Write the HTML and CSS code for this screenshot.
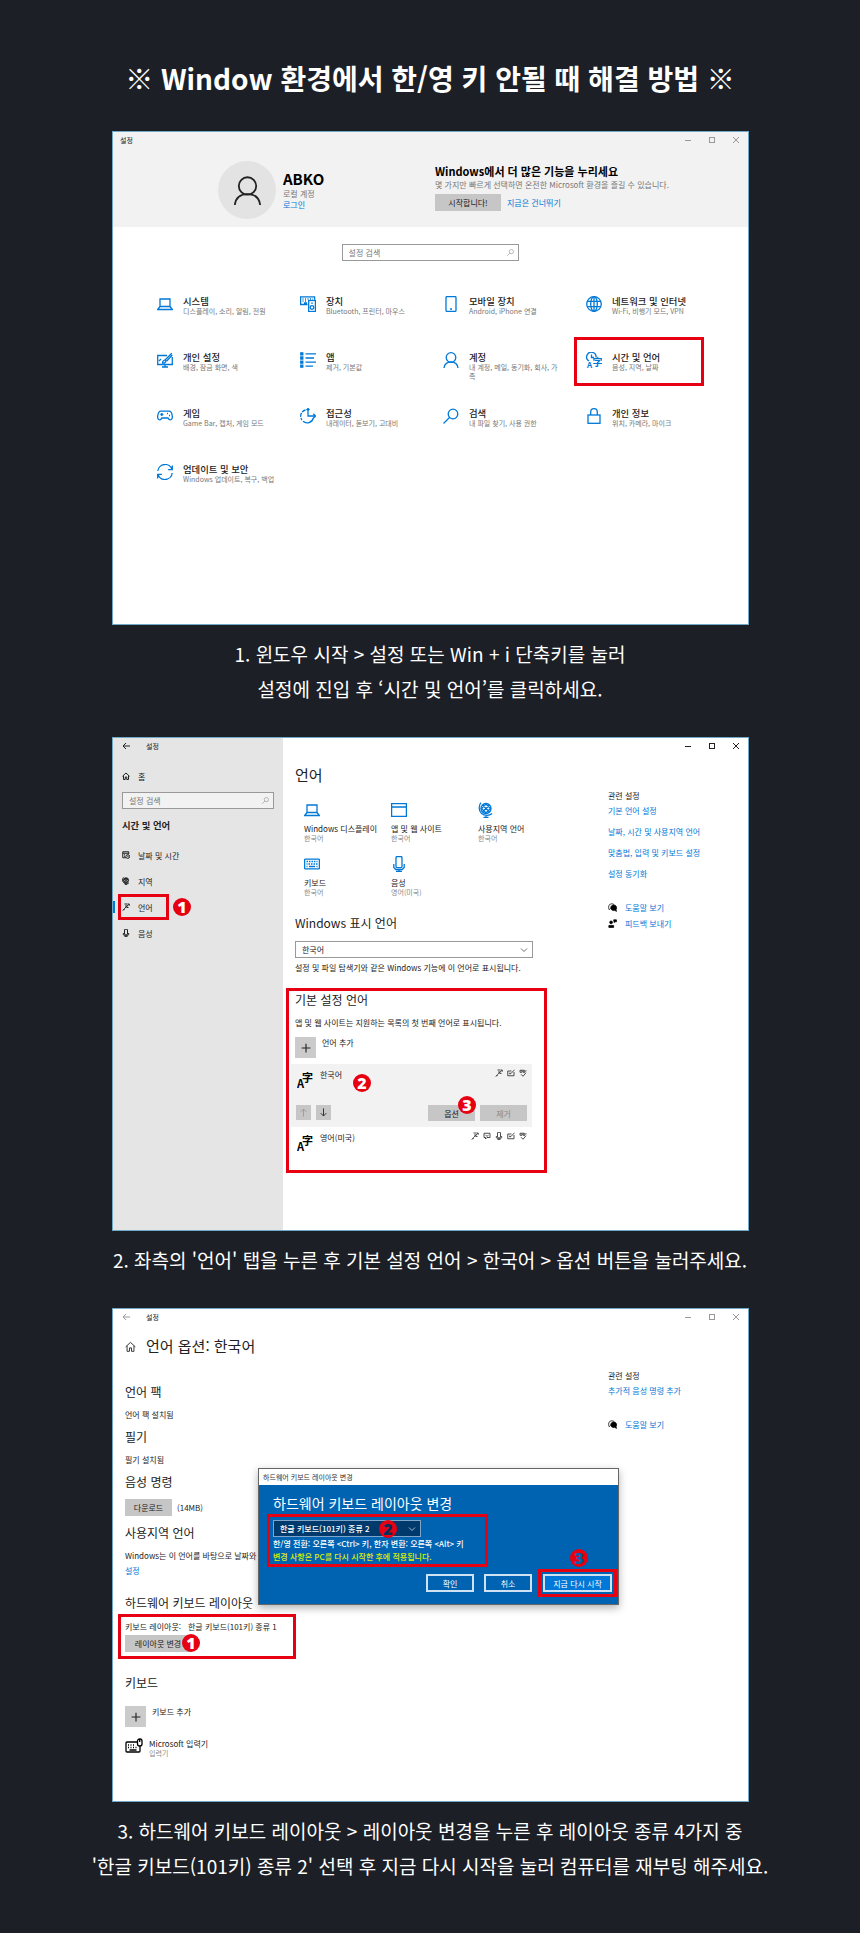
FILE: index.html
```
<!DOCTYPE html>
<html lang="ko">
<head>
  <meta charset="UTF-8">
  <meta name="viewport" content="width=device-width, initial-scale=1.0">
  <title>Window 환경에서 한/영 키 안될 때 해결 방법</title>
  <link rel="stylesheet" href="styles.css">
</head>
<body>

  <!-- 아이콘 모음 -->
  <svg class="sprite" aria-hidden="true">
    <symbol id="i-min" viewBox="0 0 8 8"><path d="M1 4.5h6"/></symbol>
    <symbol id="i-max" viewBox="0 0 8 8"><rect x="1.5" y="1.5" width="5" height="5"/></symbol>
    <symbol id="i-close" viewBox="0 0 8 8"><path d="M1 1l6 6M7 1L1 7"/></symbol>
    <symbol id="i-back" viewBox="0 0 8 8"><path d="M8 4H1M4 1L1 4l3 3"/></symbol>
    <symbol id="i-find" viewBox="0 0 16 16"><circle cx="10" cy="6" r="4.8"/><path d="M6.5 9.5L.5 15.5"/></symbol>
    <symbol id="i-user" viewBox="0 0 16 16"><circle cx="8" cy="5.5" r="4.8"/><path d="M1 16c.5-4 3.200-6 7-6s6.500 2 7 6"/></symbol>
    <symbol id="i-laptop" viewBox="0 0 16 16"><path d="M3 3h10v7.500H3zM3 10.500L.7 13.500h14.600L13 10.500"/></symbol>
    <symbol id="i-device" viewBox="0 0 16 16"><path d="M7.500 8.500H.6V.8h14v3M2.500 3h1M5 3h1M7.500 3h1M10 3h1M12.500 3h.6M2.500 5h1M5 5h1M4 7h3"/><rect x="8.700" y="4.500" width="6.700" height="11"/><circle cx="12" cy="11.500" r="1.800"/><path d="M12 6.500v1.500"/></symbol>
    <symbol id="i-phone" viewBox="0 0 16 16"><rect x="3" y=".6" width="10" height="14.800" rx="1"/><path d="M7 13h2"/></symbol>
    <symbol id="i-globe" viewBox="0 0 16 16"><circle cx="8" cy="8" r="7.300"/><ellipse cx="8" cy="8" rx="3.300" ry="7.300"/><path d="M1.500 5.300h13M1.500 10.700h13M8 .7v14.600"/></symbol>
    <symbol id="i-paint" viewBox="0 0 16 16"><path d="M10 3.500H.7v9h14.600V5M5 15h6M8 12.500V15M2 9l2-2M14.800 1.200L8 8M15.300 3L9.500 9.300"/><path d="M8.800 8.500c-2-1-3 .5-3.300 2.500 1.800.3 3.600-.5 3.300-2.500z"/></symbol>
    <symbol id="i-apps" viewBox="0 0 16 16"><path d="M5.500 1.800H16M5.500 6H14M5.500 10.200H16M5.500 14.200H13"/><path class="solid" d="M.8.8h2v2h-2zM.8 5h2v2h-2zM.8 9.200h2v2h-2zM.8 13.200h2v2h-2z"/></symbol>
    <symbol id="i-game" viewBox="0 0 16 16"><path d="M4 3.200h8c2 0 3 2 3.300 5 .4 3.400-2 4.600-3.600 2.800L11 10H5l-.8 1C2.700 12.800.3 11.600.7 8.200 1 5.200 2 3.200 4 3.200zM3.300 6.500h3M4.800 5v3M10 5.500h1M12 7.500h1"/></symbol>
    <symbol id="i-ease" viewBox="0 0 16 16"><path d="M5.500 2A6.300 6.300 0 0 0 2 12" stroke-dasharray="4 1"/><path d="M3 13.300A6.300 6.300 0 0 0 13.300 10M8 .5v7.500h7.500M13.300 5.800L15.500 8l-2.200 2.200M6.500 2L8 .5l1.500 1.500"/></symbol>
    <symbol id="i-lock" viewBox="0 0 16 16"><rect x="2" y="7" width="12" height="8.300"/><path d="M4.700 7V4a3.300 3.300 0 0 1 6.600 0v3"/></symbol>
    <symbol id="i-sync" viewBox="0 0 16 16"><path d="M.8 7A7.300 7.300 0 0 1 15 5.500M15.300 1.500v4.200h-4.200M15.200 9A7.300 7.300 0 0 1 1 10.500M.7 14.500v-4.200h4.200"/></symbol>
    <symbol id="i-clock-lang" viewBox="0 0 16 16"><path d="M3 9A4.700 4.700 0 1 1 10 5.500M5.500 2.500v3h2.500"/><text class="glyph" x="1" y="15.800" font-size="8">A</text><text class="glyph" x="6.500" y="14" font-size="10">字</text></symbol>
    <symbol id="i-lang" viewBox="0 0 16 16"><text class="glyph" x="0" y="15.500" font-size="11">A</text><text class="glyph" x="5" y="10" font-size="11">字</text></symbol>
    <symbol id="i-window" viewBox="0 0 16 16"><path d="M.6 1.600h14.800v12.800H.6zM.6 5h14.800"/></symbol>
    <symbol id="i-region" viewBox="0 0 16 16"><circle cx="8" cy="6.500" r="5"/><path d="M3 .8C.5 3 .5 9 3.500 11.500s8 2.500 10.500 0M8 13.300v2M5.500 15.400h5M4.500 3l7 7M11.500 3l-7 7M3.500 6.500L8 2l4.500 4.500L8 11z"/></symbol>
    <symbol id="i-keyboard" viewBox="0 0 16 16"><rect x=".6" y="3.200" width="14.800" height="9.600" rx=".8"/><path d="M2.500 5.500h1.500M5 5.500h1.500M7.500 5.500H9M10 5.500h1.500M12.500 5.500h1M2.500 8h1M4.500 8h1.500M7 8h1.500M9.500 8H11M12 8h1.500M2.500 10.500h1M5 10.500h6M12.500 10.500h1"/></symbol>
    <symbol id="i-mic" viewBox="0 0 16 16"><rect x="5" y=".6" width="6" height="11" rx="1"/><path d="M2.800 8v3.500l2 2h6.400l2-2V8M8 13.500v2M5 15.500h6"/></symbol>
    <symbol id="i-home" viewBox="0 0 16 16"><path d="M1 8.500L8 2l7 6.500M3 7v8h3.500v-5h3v5H13V7"/></symbol>
    <symbol id="i-date" viewBox="0 0 16 16"><path d="M8 13.500H1.500v-12h12V6M1.500 4.500h12M4 7.500h2M4 10.500h2"/><circle cx="11.500" cy="11" r="3.800"/><path d="M11.500 9v2.200H13"/></symbol>
    <symbol id="i-pen" viewBox="0 0 16 16"><path d="M5 2h6M11.500 2h3v3.500M13.500 3L5 11l-1.500 3.500M6 6h5M9 9h4M1.500 15l3-3"/></symbol>
    <symbol id="i-speech" viewBox="0 0 16 16"><path d="M2 2.500h12v8.500H8l-3 3v-3H2zM5 6.500c1.500 2 4.500 2 6 0"/></symbol>
    <symbol id="i-write" viewBox="0 0 16 16"><path d="M9 4H1.500v9.500h12.500V6M15 1.500L8 9l-2.500.8M4 8.500h3"/></symbol>
    <symbol id="i-abc" viewBox="0 0 16 16"><path d="M2 2.500h4v4H2zM8 1v5.500h4V3.500H8M15 3.500h-2M4 10.500l4 4 6-7"/></symbol>
    <symbol id="i-help" viewBox="0 0 16 16"><path d="M2 11.500C0 8 1 2 5.500 1.500 9 1 11 3 11 3M1.500 12.500L4 10"/><path class="solid" d="M10 3.500a5 5 0 0 0-3.500 8.700c1.500 1.400 4 1.600 5.500.8l3 2-.6-3.600A5 5 0 0 0 10 3.500z"/></symbol>
    <symbol id="i-feedback" viewBox="0 0 16 16"><circle class="solid" cx="5.500" cy="6" r="2.500"/><path class="solid" d="M1.500 15v-3.500h8.500V15zM10 1.500h5v3.500h-2.500l-1.500 1.500z"/></symbol>
    <symbol id="i-ime" viewBox="0 0 18 16"><rect x="1" y="4" width="14" height="10" rx="1"/><path d="M3 7h1M5.500 7h1M8 7h1M3 9.500h1M5.500 9.500h1M8 9.500h1M10.500 9.500h1M4.500 12h7"/><rect class="mouse" x="12.500" y="1" width="4.500" height="7" rx="2"/><path d="M14.700 1v3"/></symbol>
    <symbol id="i-plus" viewBox="0 0 16 16"><path d="M8 3v10M3 8h10"/></symbol>
    <symbol id="i-up" viewBox="0 0 16 16"><path d="M8 14V3M4 7l4-4 4 4"/></symbol>
    <symbol id="i-down" viewBox="0 0 16 16"><path d="M8 2v11M4 9l4 4 4-4"/></symbol>
    <symbol id="i-chevron" viewBox="0 0 16 16"><path d="M2 5l6 6 6-6"/></symbol>
  </svg>

  <main class="guide">
    <h1>※ Window 환경에서 한/영 키 안될 때 해결 방법 ※</h1>

    <!-- 1단계 : 설정 홈 -->
    <section class="window">
      <div class="account-bar">
        <div class="titlebar muted">
          <span class="app-name">설정</span>
          <div class="controls">
            <svg><use href="#i-min"/></svg>
            <svg><use href="#i-max"/></svg>
            <svg><use href="#i-close"/></svg>
          </div>
        </div>
        <div class="account">
          <div class="profile">
            <div class="avatar"><svg><use href="#i-user"/></svg></div>
            <div>
              <strong class="user-name">ABKO</strong>
              <p class="gray">로컬 계정</p>
              <a href="#">로그인</a>
            </div>
          </div>
          <div class="promo">
            <h2>Windows에서 더 많은 기능을 누리세요</h2>
            <p class="gray">몇 가지만 빠르게 선택하면 온전한 Microsoft 환경을 즐길 수 있습니다.</p>
            <div class="promo-actions">
              <button class="btn wide">시작합니다!</button>
              <a href="#">지금은 건너뛰기</a>
            </div>
          </div>
        </div>
      </div>

      <label class="search home-search">
        <input type="text" placeholder="설정 검색" aria-label="설정 검색">
        <svg><use href="#i-find"/></svg>
      </label>

      <div class="categories">
        <div class="category"><svg class="icon"><use href="#i-laptop"/></svg><div><h3>시스템</h3><p>디스플레이, 소리, 알림, 전원</p></div></div>
        <div class="category"><svg class="icon"><use href="#i-device"/></svg><div><h3>장치</h3><p>Bluetooth, 프린터, 마우스</p></div></div>
        <div class="category"><svg class="icon"><use href="#i-phone"/></svg><div><h3>모바일 장치</h3><p>Android, iPhone 연결</p></div></div>
        <div class="category"><svg class="icon"><use href="#i-globe"/></svg><div><h3>네트워크 및 인터넷</h3><p>Wi-Fi, 비행기 모드, VPN</p></div></div>
        <div class="category"><svg class="icon"><use href="#i-paint"/></svg><div><h3>개인 설정</h3><p>배경, 잠금 화면, 색</p></div></div>
        <div class="category"><svg class="icon"><use href="#i-apps"/></svg><div><h3>앱</h3><p>제거, 기본값</p></div></div>
        <div class="category"><svg class="icon"><use href="#i-user"/></svg><div><h3>계정</h3><p>내 계정, 메일, 동기화, 회사, 가족</p></div></div>
        <div class="category marked"><svg class="icon"><use href="#i-clock-lang"/></svg><div><h3>시간 및 언어</h3><p>음성, 지역, 날짜</p></div></div>
        <div class="category"><svg class="icon"><use href="#i-game"/></svg><div><h3>게임</h3><p>Game Bar, 캡처, 게임 모드</p></div></div>
        <div class="category"><svg class="icon"><use href="#i-ease"/></svg><div><h3>접근성</h3><p>내레이터, 돋보기, 고대비</p></div></div>
        <div class="category"><svg class="icon"><use href="#i-find"/></svg><div><h3>검색</h3><p>내 파일 찾기, 사용 권한</p></div></div>
        <div class="category"><svg class="icon"><use href="#i-lock"/></svg><div><h3>개인 정보</h3><p>위치, 카메라, 마이크</p></div></div>
        <div class="category"><svg class="icon"><use href="#i-sync"/></svg><div><h3>업데이트 및 보안</h3><p>Windows 업데이트, 복구, 백업</p></div></div>
      </div>
    </section>
    <p class="caption">1. 윈도우 시작 &gt; 설정 또는 Win + i 단축키를 눌러<br>설정에 진입 후 ‘시간 및 언어’를 클릭하세요.</p>

    <!-- 2단계 : 언어 -->
    <section class="window split">
      <aside class="sidebar">
        <div class="titlebar">
          <svg class="back"><use href="#i-back"/></svg>
          <span class="app-name">설정</span>
        </div>
        <a class="home" href="#"><svg><use href="#i-home"/></svg>홈</a>
        <label class="search">
          <input type="text" placeholder="설정 검색" aria-label="설정 검색">
          <svg><use href="#i-find"/></svg>
        </label>
        <h3 class="side-title">시간 및 언어</h3>
        <ul class="nav">
          <li><a href="#"><svg><use href="#i-date"/></svg>날짜 및 시간</a></li>
          <li><a href="#"><svg><use href="#i-region"/></svg>지역</a></li>
          <li class="active"><a href="#"><svg><use href="#i-pen"/></svg>언어</a><span class="badge">1</span></li>
          <li><a href="#"><svg><use href="#i-mic"/></svg>음성</a></li>
        </ul>
      </aside>

      <div class="content">
        <div class="titlebar">
          <div class="controls">
            <svg><use href="#i-min"/></svg>
            <svg><use href="#i-max"/></svg>
            <svg><use href="#i-close"/></svg>
          </div>
        </div>
        <h2 class="page-title">언어</h2>
        <div class="columns">
          <div>
            <div class="tiles">
              <div class="tile"><svg class="icon"><use href="#i-laptop"/></svg><h4>Windows 디스플레이</h4><p>한국어</p></div>
              <div class="tile"><svg class="icon"><use href="#i-window"/></svg><h4>앱 및 웹 사이트</h4><p>한국어</p></div>
              <div class="tile"><svg class="icon"><use href="#i-region"/></svg><h4>사용지역 언어</h4><p>한국어</p></div>
              <div class="tile"><svg class="icon"><use href="#i-keyboard"/></svg><h4>키보드</h4><p>한국어</p></div>
              <div class="tile"><svg class="icon"><use href="#i-mic"/></svg><h4>음성</h4><p>영어(미국)</p></div>
            </div>
            <h3 class="section-title">Windows 표시 언어</h3>
            <div class="select display-lang">
              <select aria-label="Windows 표시 언어"><option>한국어</option></select>
              <svg><use href="#i-chevron"/></svg>
            </div>
            <p class="note">설정 및 파일 탐색기와 같은 Windows 기능에 이 언어로 표시됩니다.</p>

            <div class="box preferred">
              <h3 class="section-title">기본 설정 언어</h3>
              <p>앱 및 웹 사이트는 지원하는 목록의 첫 번째 언어로 표시됩니다.</p>
              <div class="add-row">
                <button class="add" aria-label="언어 추가"><svg><use href="#i-plus"/></svg></button>
                <span>언어 추가</span>
              </div>
              <div class="lang selected">
                <div class="lang-head">
                  <svg class="lang-icon"><use href="#i-lang"/></svg>
                  <span>한국어</span>
                  <div class="features">
                    <svg><use href="#i-pen"/></svg>
                    <svg><use href="#i-write"/></svg>
                    <svg><use href="#i-abc"/></svg>
                  </div>
                  <span class="badge">2</span>
                </div>
                <div class="lang-actions">
                  <button class="move" aria-label="위로" disabled><svg><use href="#i-up"/></svg></button>
                  <button class="move" aria-label="아래로"><svg><use href="#i-down"/></svg></button>
                  <button class="btn option">옵션<span class="badge">3</span></button>
                  <button class="btn" disabled>제거</button>
                </div>
              </div>
              <div class="lang">
                <div class="lang-head">
                  <svg class="lang-icon"><use href="#i-lang"/></svg>
                  <span>영어(미국)</span>
                  <div class="features">
                    <svg><use href="#i-pen"/></svg>
                    <svg><use href="#i-speech"/></svg>
                    <svg><use href="#i-mic"/></svg>
                    <svg><use href="#i-write"/></svg>
                    <svg><use href="#i-abc"/></svg>
                  </div>
                </div>
              </div>
            </div>
          </div>

          <div class="related">
            <h4>관련 설정</h4>
            <ul>
              <li><a href="#">기본 언어 설정</a></li>
              <li><a href="#">날짜, 시간 및 사용지역 언어</a></li>
              <li><a href="#">맞춤법, 입력 및 키보드 설정</a></li>
              <li><a href="#">설정 동기화</a></li>
            </ul>
            <ul class="support">
              <li><svg><use href="#i-help"/></svg><a href="#">도움말 보기</a></li>
              <li><svg><use href="#i-feedback"/></svg><a href="#">피드백 보내기</a></li>
            </ul>
          </div>
        </div>
      </div>
    </section>
    <p class="caption">2. 좌측의 '언어' 탭을 누른 후 기본 설정 언어 &gt; 한국어 &gt; 옵션 버튼을 눌러주세요.</p>

    <!-- 3단계 : 언어 옵션 -->
    <section class="window options">
      <div class="titlebar muted">
        <svg class="back"><use href="#i-back"/></svg>
        <span class="app-name">설정</span>
        <div class="controls">
          <svg><use href="#i-min"/></svg>
          <svg><use href="#i-max"/></svg>
          <svg><use href="#i-close"/></svg>
        </div>
      </div>
      <h2 class="page-title"><svg><use href="#i-home"/></svg>언어 옵션: 한국어</h2>
      <div class="columns">
        <div class="option-list">
          <h3 class="section-title">언어 팩</h3>
          <p>언어 팩 설치됨</p>
          <h3 class="section-title">필기</h3>
          <p>필기 설치됨</p>
          <h3 class="section-title">음성 명령</h3>
          <div class="download"><button class="btn">다운로드</button><span>(14MB)</span></div>
          <h3 class="section-title">사용지역 언어</h3>
          <div>
            <p>Windows는 이 언어를 바탕으로 날짜와</p>
            <a class="region-link" href="#">설정</a>
          </div>
          <h3 class="section-title hardware">하드웨어 키보드 레이아웃</h3>
          <div class="box layout">
            <p><span>키보드 레이아웃:</span><span>한글 키보드(101키) 종류 1</span></p>
            <button class="btn wide">레이아웃 변경<span class="badge">1</span></button>
          </div>
          <h3 class="section-title keyboards">키보드</h3>
          <div class="add-row">
            <button class="add" aria-label="키보드 추가"><svg><use href="#i-plus"/></svg></button>
            <span>키보드 추가</span>
          </div>
          <div class="ime">
            <svg><use href="#i-ime"/></svg>
            <div><h4>Microsoft 입력기</h4><p>입력기</p></div>
          </div>
        </div>
        <div class="related">
          <h4>관련 설정</h4>
          <ul><li><a href="#">추가적 음성 명령 추가</a></li></ul>
          <ul class="support">
            <li><svg><use href="#i-help"/></svg><a href="#">도움말 보기</a></li>
          </ul>
        </div>
      </div>

      <div class="dialog" role="dialog" aria-label="하드웨어 키보드 레이아웃 변경">
        <div class="dialog-bar">하드웨어 키보드 레이아웃 변경</div>
        <div class="dialog-body">
          <h3>하드웨어 키보드 레이아웃 변경</h3>
          <div class="box dialog-box">
            <div class="select dark">
              <select aria-label="키보드 종류"><option>한글 키보드(101키) 종류 2</option></select>
              <svg><use href="#i-chevron"/></svg>
              <span class="badge navy">2</span>
            </div>
            <p>한/영 전환: 오른쪽 &lt;Ctrl&gt; 키, 한자 변환: 오른쪽 &lt;Alt&gt; 키</p>
            <p class="warn">변경 사항은 PC를 다시 시작한 후에 적용됩니다.</p>
          </div>
          <div class="dialog-actions">
            <button>확인</button>
            <button>취소</button>
            <div class="box restart"><button>지금 다시 시작</button><span class="badge blue">3</span></div>
          </div>
        </div>
      </div>
    </section>
    <p class="caption">3. 하드웨어 키보드 레이아웃 &gt; 레이아웃 변경을 누른 후 레이아웃 종류 4가지 중<br>'한글 키보드(101키) 종류 2' 선택 후 지금 다시 시작을 눌러 컴퓨터를 재부팅 해주세요.</p>
  </main>

</body>
</html>
```
FILE: styles.css
```
*,
*::before,
*::after {
  box-sizing: border-box;
  margin: 0;
  padding: 0;
}

body {
  background-color: #1d1f27;
  font-family: "Noto Sans CJK KR", "Noto Sans", sans-serif;
  color: #fff;
}

ul {
  list-style: none;
}

a {
  color: #0078d7;
  text-decoration: none;
}

button,
input,
select {
  font: inherit;
  color: inherit;
}

button {
  border: none;
  cursor: pointer;
}

svg {
  display: block;
  flex: none;
  fill: none;
  stroke: currentColor;
  stroke-width: 1.3;
}

.sprite {
  display: none;
}

.glyph {
  font-weight: 700;
  fill: currentColor;
  stroke: none;
}

.solid {
  fill: currentColor;
}

.mouse {
  fill: #fff;
}

.guide {
  padding: 58px 0 50px;
}

h1 {
  font-size: 28px;
  line-height: 40px;
  font-weight: 700;
  text-align: center;
  margin-bottom: 33px;
}

.caption {
  font-size: 19px;
  line-height: 35px;
  text-align: center;
  margin: 11px 0 31px;
}

.caption:last-child {
  margin-bottom: 0;
}

/* window */
.window {
  position: relative;
  margin: 0 111px 0 112px;
  background-color: #fff;
  border: 1px solid #6fa9c6;
  color: #222;
  font-size: 8px;
  line-height: 11px;
}

.window h3 {
  font-weight: 500;
}

.window h4 {
  font-weight: 400;
}

.titlebar {
  display: flex;
  align-items: center;
  height: 16px;
  padding-right: 8px;
}

.app-name {
  font-size: 7px;
}

.controls {
  display: flex;
  gap: 16px;
  margin-left: auto;
}

.controls svg,
.back {
  width: 8px;
  height: 8px;
  stroke-width: 1;
}

.back {
  margin-right: 16px;
}

.muted svg {
  color: #999;
}

.gray {
  color: #777;
}

.btn {
  position: relative;
  width: 47px;
  height: 17px;
  background-color: #c6c6c6;
}

.btn.wide {
  width: 66px;
}

.btn:disabled {
  color: #8a8a8a;
}

.search {
  display: flex;
  align-items: center;
  height: 17px;
  padding: 0 4px 0 6px;
  border: 1px solid #999;
}

.search input {
  flex: 1;
  min-width: 0;
  border: none;
  background: none;
  outline: none;
}

.search input::placeholder {
  color: #777;
}

.search svg {
  width: 7px;
  height: 7px;
  color: #888;
}

/* red marks */
.box {
  border: 3px solid #e60012;
}

.badge {
  position: absolute;
  width: 18px;
  height: 18px;
  border-radius: 50%;
  background-color: #e60012;
  color: #fff;
  font-family: "Open Sans", "Noto Sans", sans-serif;
  font-size: 16px;
  font-weight: 800;
  line-height: 18px;
  text-align: center;
}

.badge.navy {
  color: #00305c;
}

.badge.blue {
  color: #0063b1;
}

/* settings home */
.account-bar {
  background-color: #f2f2f2;
  padding: 0 0 8px 7px;
}

.account {
  display: flex;
  padding: 13px 0 0 98px;
}

.profile {
  display: flex;
  align-items: center;
  gap: 7px;
  width: 217px;
}

.avatar {
  display: flex;
  align-items: center;
  justify-content: center;
  width: 58px;
  height: 58px;
  border-radius: 50%;
  background-color: #e3e3e3;
}

.avatar svg {
  width: 29px;
  height: 29px;
  stroke-width: 1;
}

.user-name {
  display: block;
  color: #000;
  font-size: 15px;
  line-height: 18px;
}

.profile a {
  display: block;
}

.promo {
  padding-top: 2px;
}

.promo h2 {
  color: #000;
  font-size: 11px;
  line-height: 16px;
}

.promo-actions {
  display: flex;
  align-items: center;
  gap: 6px;
  margin-top: 4px;
}

.home-search {
  width: 28%;
  margin: 17px auto 35px;
}

.categories {
  display: grid;
  grid-template-columns: repeat(4, 1fr);
  grid-auto-rows: 56px;
  padding: 0 19px 104px 44px;
}

.category {
  position: relative;
  display: flex;
  gap: 10px;
  padding-right: 25px;
}

.category p {
  color: #777;
  font-size: 7px;
  line-height: 9px;
}

.icon {
  width: 16px;
  height: 16px;
  color: #0078d7;
}

.marked::after {
  content: "";
  position: absolute;
  inset: -15px 25px 22px -12px;
  border: 3px solid #e60012;
}

/* language page */
.split {
  display: flex;
}

.sidebar {
  width: 170px;
  padding: 0 9px;
  background-color: #e5e5e5;
}

.sidebar .search {
  margin-top: 8px;
  background-color: #f2f2f2;
}

.home,
.nav a {
  display: flex;
  align-items: center;
  gap: 8px;
  color: #222;
}

.home {
  height: 16px;
  margin-top: 14px;
}

.home svg,
.nav svg {
  width: 8px;
  height: 8px;
  stroke-width: 2;
}

.window .side-title {
  margin: 10px 0 11px;
  font-weight: 700;
  line-height: 12px;
}

.nav li {
  position: relative;
}

.nav a {
  height: 26px;
}

.nav .active::before {
  content: "";
  position: absolute;
  left: -9px;
  top: 7px;
  width: 2px;
  height: 12px;
  background-color: #0078d7;
}

.nav .active::after {
  content: "";
  position: absolute;
  inset: 0 auto 0 -4px;
  width: 51px;
  border: 3px solid #e60012;
}

.nav .badge {
  left: 51px;
  top: 4px;
}

.content {
  flex: 1;
  padding: 0 0 57px 12px;
}

.page-title {
  display: flex;
  align-items: center;
  gap: 10px;
  margin-top: 11px;
  font-size: 15px;
  font-weight: 400;
  line-height: 20px;
}

.page-title svg {
  width: 11px;
  height: 11px;
}

.columns {
  display: grid;
  grid-template-columns: 1fr 140px;
}

.tiles {
  display: grid;
  grid-template-columns: repeat(3, 87px);
  grid-auto-rows: 54px;
  padding: 17px 0 0 9px;
}

.tile h4 {
  margin-top: 5px;
  white-space: nowrap;
}

.tile p,
.ime p {
  color: #888;
  font-size: 7px;
  line-height: 9px;
}

.section-title {
  font-size: 12px;
  line-height: 16px;
}

.window .section-title {
  font-weight: 400;
}

.tiles + .section-title {
  margin-top: 5px;
}

.select {
  position: relative;
  height: 17px;
  border: 1px solid #999;
}

.select select {
  display: block;
  width: 100%;
  height: 100%;
  padding-left: 6px;
  border: none;
  background: none;
  appearance: none;
}

.select svg {
  position: absolute;
  right: 4px;
  top: 4px;
  width: 8px;
  height: 8px;
  pointer-events: none;
}

.display-lang {
  width: 238px;
  margin: 10px 0 4px;
}

.preferred {
  width: 261px;
  margin: 15px 0 0 -9px;
  padding: 1px 12px 2px 6px;
}

.preferred > p {
  margin: 9px 0;
}

.add-row {
  display: flex;
  gap: 6px;
}

.add {
  display: flex;
  align-items: center;
  justify-content: center;
  width: 21px;
  height: 21px;
  background-color: #cbcbcb;
}

.add svg {
  width: 14px;
  height: 14px;
}

.lang {
  margin-left: -4px;
  padding: 5px 5px 0;
}

.lang.selected {
  margin-top: 6px;
  padding-bottom: 6px;
  background-color: #f2f2f2;
}

.lang-head {
  position: relative;
  display: flex;
  align-items: flex-start;
  gap: 7px;
  height: 36px;
}

.lang-icon {
  width: 16px;
  height: 16px;
  margin: 3px 0 0 1px;
  color: #000;
}

.features {
  display: flex;
  gap: 4px;
  margin-left: auto;
}

.features svg {
  width: 8px;
  height: 8px;
  stroke-width: 1.6;
}

.lang-head .badge {
  left: 57px;
  top: 5px;
}

.lang-actions {
  display: flex;
  gap: 5px;
}

.lang-actions .btn {
  height: 16px;
}

.move {
  width: 15px;
  height: 15px;
  padding: 2px;
  background-color: #c6c6c6;
}

.move svg {
  width: 11px;
  height: 11px;
}

.move:disabled {
  color: #999;
}

.option {
  margin-left: auto;
}

.option .badge {
  left: 30px;
  top: -9px;
}

.related {
  padding-top: 5px;
}

.related ul {
  display: grid;
  gap: 10px;
  margin-top: 4px;
}

.related .support {
  gap: 5px;
  margin-top: 23px;
}

.support li {
  display: flex;
  align-items: center;
  gap: 8px;
}

.support svg {
  width: 9px;
  height: 9px;
  color: #000;
}

/* language options page */
.options {
  padding: 0 0 43px 12px;
}

.options .titlebar {
  margin-left: -3px;
}

.options .related {
  padding-top: 14px;
}

.option-list {
  display: grid;
  gap: 9px;
  align-content: start;
  justify-items: start;
  padding-top: 28px;
}

.download {
  display: flex;
  align-items: center;
  gap: 5px;
  height: 17px;
}

.region-link {
  display: block;
  margin-top: 4px;
}

.hardware {
  margin-top: 10px;
}

.layout {
  width: 178px;
  margin: -6px 0 0 -7px;
  padding: 4px;
}

.layout p {
  display: flex;
  gap: 7px;
  margin-bottom: 3px;
}

.layout .badge {
  left: 57px;
  top: -1px;
}

.keyboards {
  margin: 7px 0 6px;
}

.ime {
  display: flex;
  gap: 6px;
  margin-top: 2px;
}

.ime svg {
  width: 18px;
  height: 16px;
  color: #000;
}

.dialog {
  position: absolute;
  left: 145px;
  right: 129px;
  top: 159px;
  border: 1px solid #666;
  background-color: #0063b1;
  box-shadow: 0 3px 8px rgba(0, 0, 0, 0.3);
  color: #fff;
  line-height: 13px;
}

.dialog-bar {
  padding-left: 4px;
  background-color: #fff;
  color: #333;
  font-size: 7px;
  line-height: 16px;
}

.dialog-body {
  padding: 9px 1px 7px 14px;
}

.window .dialog h3 {
  font-size: 14px;
  font-weight: 400;
  line-height: 18px;
}

.dialog-box {
  width: 221px;
  margin: 2px 0 2px -6px;
  padding: 3px 3px 1px;
  white-space: nowrap;
}

.dialog-box p {
  font-weight: 500;
}

.select.dark {
  width: 148px;
  border-color: #7fa6c8;
  background-color: #003a6c;
  font-weight: 500;
}

.select.dark option {
  color: #000;
}

.dark .badge {
  left: 105px;
  top: -1px;
}

.warn {
  color: #e1f000;
}

.dialog-actions {
  display: flex;
  align-items: center;
  justify-content: flex-end;
  gap: 10px;
}

.dialog-actions button {
  width: 48px;
  height: 18px;
  border: 2px solid #cfe2f3;
  background-color: #0063b1;
  line-height: 11px;
}

.restart {
  position: relative;
  margin-left: -4px;
  padding: 2px;
}

.dialog-actions .restart button {
  display: block;
  width: 69px;
  background-color: #0078d7;
}

.restart .badge {
  left: 29px;
  top: -23px;
}
```
